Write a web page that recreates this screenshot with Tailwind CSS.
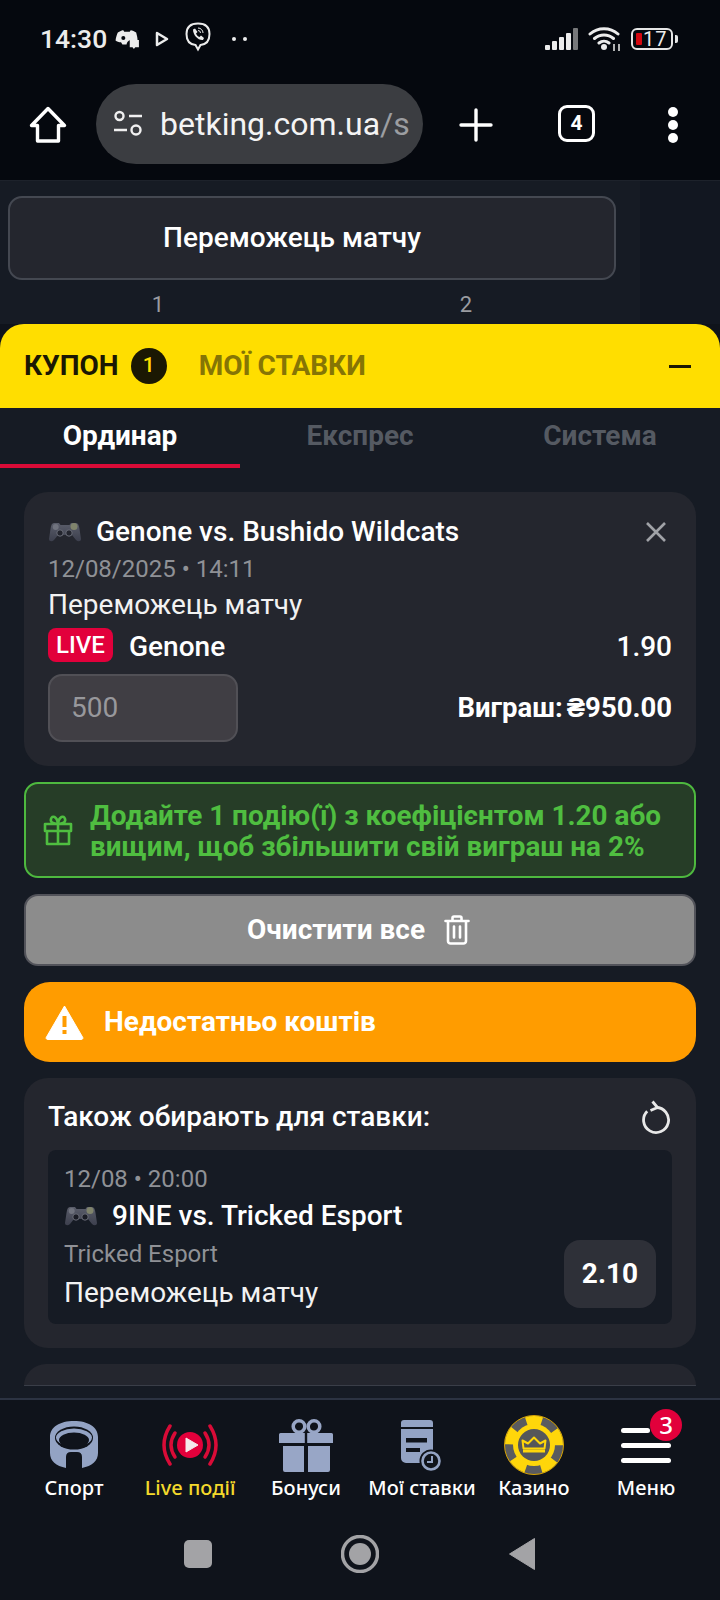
<!DOCTYPE html>
<html lang="uk"><head><meta charset="utf-8">
<script src="https://cdn.jsdelivr.net/npm/@tailwindcss/browser@4"></script>
</head>
<body class="m-0 bg-[#0f131b]">
<div class="w-[720px] h-[1600px] overflow-hidden flex flex-col font-['Roboto',sans-serif] text-white bg-[#0f131b]">

  <!-- status bar -->
  <div class="h-[78px] shrink-0 bg-[#05080e] flex items-center pl-[40px] pr-[42px]">
    <span class="text-[26.500px] font-medium text-[#ececec] leading-none">14:30</span>
    <svg class="ml-[7px]" width="26" height="22" viewBox="0 0 28 24"><path d="M4 5c3-2 5-2.500 6-2.500l1 1.500h6l1-1.500c2 .2 4 1 6 2.500 1 4 1.500 6 1.500 8h-8a6 6 0 0 0-4 5H9l-1.500-2.500C5 15.500 3 14.500 1.500 13.500 2 10 3 7 4 5z" fill="#ececec"/><circle cx="10" cy="11" r="2.200" fill="#05080e"/><path d="M17 13h10v8h-4l-1.500 2-1.500-2h-3z" fill="#ececec"/></svg>
    <svg class="ml-[15px]" width="14" height="16" viewBox="0 0 14 16"><path d="M2 2l10 6-10 6z" fill="none" stroke="#ececec" stroke-width="2.500" stroke-linejoin="round"/></svg>
    <svg class="ml-[16px]" width="26" height="34" viewBox="0 0 26 34"><path d="M13 1.500c7 0 11.500 3 11.500 10.500 0 7-3.500 10.500-9 11l-2.500 4.500-2.500-4.500c-6-.5-9-4-9-11C1.500 4.500 6 1.500 13 1.500z" fill="none" stroke="#ececec" stroke-width="2"/><path d="M8 7.500l2-1 2.500 3.500-1.500 1.500c.5 1.500 2 3 3.500 3.500l1.500-1.500 3 2.500-1 2c-5 .5-10-5-10-10.500z" fill="#ececec"/><path d="M13 6a5 5 0 0 1 5 5M13 8.500a2.500 2.500 0 0 1 2.500 2.500" fill="none" stroke="#ececec" stroke-width="1"/></svg>
    <div class="ml-[21px] flex gap-[7px]"><span class="w-[4px] h-[4px] rounded-full bg-[#ececec]"></span><span class="w-[4px] h-[4px] rounded-full bg-[#ececec]"></span></div>
    <div class="ml-auto flex items-center gap-[9px]">
      <svg width="34" height="24" viewBox="0 0 34 24"><rect x="0" y="18" width="5" height="5" rx="1" fill="#ececec"/><rect x="7" y="14" width="5" height="9" rx="1" fill="#ececec"/><rect x="14" y="10" width="5" height="13" rx="1" fill="#ececec"/><rect x="21" y="6" width="5" height="17" rx="1" fill="#ececec"/><rect x="28" y="1" width="5" height="22" rx="1" fill="#77787a"/></svg>
      <svg width="34" height="26" viewBox="0 0 34 26"><path d="M2 8a21 21 0 0 1 28 0M6.500 12.500a14.500 14.500 0 0 1 19 0M11 17a8 8 0 0 1 10 0" fill="none" stroke="#ececec" stroke-width="3" stroke-linecap="round"/><circle cx="16" cy="21" r="3" fill="#ececec"/><path d="M26 18v7M31 18v7" stroke="#ececec" stroke-width="1.500"/></svg>
      <div class="flex items-center gap-[2px]">
        <div class="w-[42px] h-[22px] rounded-[6px] border-2 border-[#e6e6e6] flex items-center pl-[3px] gap-[1px]">
          <span class="w-[6px] h-[12px] rounded-[1px] bg-[#d4070f]"></span>
          <span class="text-[20px] leading-none text-[#ececec] tracking-[1px]">17</span>
        </div>
        <span class="w-[3px] h-[8px] rounded-r-[2px] bg-[#e6e6e6]"></span>
      </div>
    </div>
  </div>

  <!-- browser bar -->
  <div class="h-[102px] shrink-0 bg-[#05080e] flex items-start pt-[6px]">
    <svg class="ml-[29px] mt-[22px]" width="38" height="38" viewBox="0 0 38 38"><path d="M19 2.500L35.500 19.500H29.500V35H8.500V19.500H2.500z" fill="none" stroke="#fff" stroke-width="3.400" stroke-linejoin="round"/></svg>
    <div class="ml-[29px] w-[327px] h-[80px] rounded-[40px] bg-[#3b3d41] flex items-center pl-[17px]">
      <svg class="shrink-0" width="30" height="28" viewBox="0 0 30 28"><circle cx="6.500" cy="6" r="4" fill="none" stroke="#f0f0f0" stroke-width="2.400"/><path d="M16 6h13M1 20h13" stroke="#f0f0f0" stroke-width="2.600"/><circle cx="23" cy="20" r="4.500" fill="none" stroke="#f0f0f0" stroke-width="2.400"/></svg>
      <span class="ml-[17px] text-[32px] leading-none whitespace-nowrap text-[#f4f4f4]">betking.com.ua<span class="text-[#9c9ea1]">/s</span></span>
    </div>
    <svg class="ml-[36px] mt-[24px]" width="34" height="34" viewBox="0 0 34 34"><path d="M17 2v30M2 17h30" stroke="#fff" stroke-width="3.400" stroke-linecap="round"/></svg>
    <div class="ml-[65px] mt-[21px] w-[37px] h-[37px] rounded-[9px] border-[3.500px] border-white flex items-center justify-center text-[21px] font-bold leading-none">4</div>
    <div class="ml-[73px] mt-[23px] flex flex-col gap-[3px]"><span class="w-[10px] h-[10px] rounded-full bg-white"></span><span class="w-[10px] h-[10px] rounded-full bg-white"></span><span class="w-[10px] h-[10px] rounded-full bg-white"></span></div>
  </div>

  <!-- page behind -->
  <div class="h-[144px] shrink-0 flex bg-[#161b24] border-t border-[#1d222b]">
    <div class="w-[640px] pl-[8px] pt-[15px]">
      <div class="w-[608px] h-[84px] rounded-[14px] border-2 border-[#444851] bg-[#24262e] flex items-center justify-center pr-[40px] text-[28px] font-medium">Переможець матчу</div>
      <div class="flex mt-[10px] text-[22px] text-[#9a9ca1] leading-[30px]">
        <span class="w-[300px] text-center">1</span><span class="w-[316px] text-center">2</span>
      </div>
    </div>
    <div class="w-[80px] bg-[#121721]"></div>
  </div>

  <!-- coupon sheet -->
  <div class="h-[1076px] shrink-0 bg-[#161b24] rounded-t-[24px] flex flex-col border-b-2 border-[#2c3342]">
    <div class="h-[84px] shrink-0 bg-[#ffde00] rounded-t-[24px] flex items-center pl-[24px] pr-[29px] text-[28px] font-bold">
      <span class="text-[#1b1803]">КУПОН</span>
      <span class="ml-[12px] w-[36px] h-[36px] rounded-full bg-[#1b1803] text-[#ffde00] text-[21px] font-medium flex items-center justify-center">1</span>
      <span class="ml-[32px] text-[#867505]">МОЇ СТАВКИ</span>
      <span class="ml-auto w-[22px] h-[3px] bg-[#1b1803]"></span>
    </div>
    <div class="h-[60px] shrink-0 flex text-[28px] font-bold text-[#555a62]">
      <div class="w-[240px] h-[60px] border-b-[4px] border-[#d90b37] text-white flex items-center justify-center">Ординар</div>
      <div class="w-[240px] h-[56px] flex items-center justify-center">Експрес</div>
      <div class="w-[240px] h-[56px] flex items-center justify-center">Система</div>
    </div>

    <div class="px-[24px] pt-[24px] flex flex-col gap-[16px]">
      <!-- bet card -->
      <div class="h-[274px] rounded-[24px] bg-[#24262e] px-[24px] pt-[22px]">
        <div class="h-[36px] flex items-center">
          <svg class="shrink-0 ml-[1px]" width="32" height="20" viewBox="0 0 32 20"><defs><linearGradient id="p1" x1="0" y1="0" x2="0" y2="1"><stop offset="0" stop-color="#5a5d6a"/><stop offset="1" stop-color="#3c3f4d"/></linearGradient></defs><path d="M5 1h5l1.500 2h9L22 1h5c2 0 3 2 3.500 6l1.500 10c0 2.500-3 3-5 1l-4-5H9l-4 5c-2 2-5 1.500-5-1L1.500 7C2 3 3 1 5 1z" fill="url(#p1)"/><circle cx="6.700" cy="5" r="3" fill="#70737e"/><circle cx="25" cy="4.500" r="3.500" fill="#80846c"/><circle cx="11" cy="11" r="3.200" fill="#23252e" stroke="#6b6e79"/><circle cx="20" cy="11" r="3.200" fill="#23252e" stroke="#6b6e79"/></svg>
          <span class="ml-[15px] text-[28px] font-medium whitespace-nowrap">Genone vs. Bushido Wildcats</span>
          <svg class="ml-auto mr-[6px]" width="20" height="20" viewBox="0 0 20 20"><path d="M1 1l18 18M19 1L1 19" stroke="#a0a2a7" stroke-width="2.600"/></svg>
        </div>
        <div class="text-[24px] leading-[38px] text-[#8f9196] whitespace-nowrap">12/08/2025 • 14:11</div>
        <div class="text-[28px] leading-[34px] text-[#f2f2f2] whitespace-nowrap">Переможець матчу</div>
        <div class="h-[36px] mt-[5px] flex items-center">
          <span class="w-[65px] h-[34px] rounded-[8px] bg-[#e2003b] text-[24px] font-medium flex items-center justify-center">LIVE</span>
          <span class="ml-[16px] pt-[3px] text-[28px] font-medium">Genone</span>
          <span class="ml-auto pt-[3px] text-[28px] font-medium">1.90</span>
        </div>
        <div class="mt-[11px] flex items-center justify-between">
          <div class="w-[190px] h-[68px] rounded-[14px] bg-[#403e44] border-2 border-[#515056] flex items-center pl-[21px] text-[28px] text-[#98989c]">500</div>
          <span class="flex gap-[4px] text-[27.500px] font-bold whitespace-nowrap"><span>Виграш:</span><span>₴950.00</span></span>
        </div>
      </div>

      <!-- promo -->
      <div class="h-[96px] rounded-[14px] bg-[#263d27] border-2 border-[#4eb93f] flex items-center pl-[17px] text-[#4fbe40]">
        <svg class="shrink-0" width="30" height="32" viewBox="0 0 30 32"><path d="M2 10h26v7H2zM4 17h22v13H4zM15 10v20M15 10c-5 0-8-2-7-5 1-4 6-3 7 5zm0 0c5 0 8-2 7-5-1-4-6-3-7 5z" fill="none" stroke="#4fbe40" stroke-width="2.600" stroke-linejoin="round"/></svg>
        <div class="ml-[17px] pt-[1px] text-[27.900px] font-bold leading-[31px] whitespace-nowrap">Додайте 1 подію(ї) з коефіцієнтом 1.20 або<br>вищим, щоб збільшити свій виграш на 2%</div>
      </div>

      <!-- clear -->
      <div class="h-[72px] rounded-[14px] bg-[#8c8c8c] border-2 border-[#52535a] flex items-center justify-center gap-[19px] pr-[3px] text-[28px] font-bold">
        <span>Очистити все</span>
        <svg width="26" height="30" viewBox="0 0 26 30"><path d="M1.500 6h23M8.500 6V3a1.500 1.500 0 0 1 1.500-1.500h6A1.500 1.500 0 0 1 17.500 3v3M4 6v20a2.500 2.500 0 0 0 2.500 2.500h13A2.500 2.500 0 0 0 22 26V6M10 11.500v11M16 11.500v11" fill="none" stroke="#fff" stroke-width="2.600" stroke-linecap="round"/></svg>
      </div>

      <!-- warning -->
      <div class="h-[80px] rounded-[26px] bg-[#ff9c00] flex items-center pl-[21px] text-[28px] font-bold">
        <svg class="shrink-0" width="39" height="36" viewBox="0 0 39 36"><path d="M19.500 2L37.500 33a1.500 1.500 0 0 1-1.300 2.500H2.800A1.500 1.500 0 0 1 1.500 33z" fill="#fff" stroke="#fff" stroke-linejoin="round"/><path d="M17.500 12h4v11h-4zM17.500 26h4v4h-4z" fill="#ff9c00"/></svg>
        <span class="ml-[20px]">Недостатньо коштів</span>
      </div>

      <!-- also -->
      <div class="h-[270px] rounded-[24px] bg-[#24262e] px-[24px]">
        <div class="h-[72px] flex items-center justify-between">
          <span class="pt-[6px] text-[28px] font-medium whitespace-nowrap">Також обирають для ставки:</span>
          <svg class="mt-[6px] mr-[1px]" width="30" height="34" viewBox="0 0 30 34"><path d="M15 7.500A12.500 12.500 0 1 1 6.200 11.200" fill="none" stroke="#e8e8e8" stroke-width="2.800"/><path d="M11.500 1.500L16.500 7.500L9.500 10.500" fill="none" stroke="#e8e8e8" stroke-width="2.800"/></svg>
        </div>
        <div class="h-[174px] rounded-[8px] bg-[#161b24] px-[16px] pt-[11px] relative">
          <div class="text-[24px] leading-[36px] text-[#8f9196]">12/08 • 20:00</div>
          <div class="h-[38px] flex items-center">
            <svg class="shrink-0 ml-[1px]" width="32" height="20" viewBox="0 0 32 20"><defs><linearGradient id="p2" x1="0" y1="0" x2="0" y2="1"><stop offset="0" stop-color="#5a5d6a"/><stop offset="1" stop-color="#3c3f4d"/></linearGradient></defs><path d="M5 1h5l1.500 2h9L22 1h5c2 0 3 2 3.500 6l1.500 10c0 2.500-3 3-5 1l-4-5H9l-4 5c-2 2-5 1.500-5-1L1.500 7C2 3 3 1 5 1z" fill="url(#p2)"/><circle cx="6.700" cy="5" r="3" fill="#70737e"/><circle cx="25" cy="4.500" r="3.500" fill="#80846c"/><circle cx="11" cy="11" r="3.200" fill="#1a1c25" stroke="#6b6e79"/><circle cx="20" cy="11" r="3.200" fill="#1a1c25" stroke="#6b6e79"/></svg>
            <span class="ml-[15px] text-[28px] font-medium whitespace-nowrap">9INE vs. Tricked Esport</span>
          </div>
          <div class="text-[24px] leading-[38px] text-[#8f9196]">Tricked Esport</div>
          <div class="text-[28px] leading-[40px] text-[#f2f2f2]">Переможець матчу</div>
          <div class="absolute right-[16px] top-[90px] w-[92px] h-[68px] rounded-[16px] bg-[#2e3038] flex items-center justify-center text-[28px] font-bold">2.10</div>
        </div>
      </div>
    </div>
    <!-- next card peeks -->
    <div class="mx-[24px] mt-[16px] h-[22px] rounded-t-[24px] bg-[#24262e] border-b border-[#3a3e48] shrink-0"></div>
  </div>

  <!-- bottom nav -->
  <div class="h-[200px] shrink-0 bg-[#0f131b] flex flex-col font-['Noto_Sans',sans-serif]">
    <div class="flex pl-[16px] pt-[14px] text-[20px] font-medium leading-[26px]">
      <div class="w-[116px] flex flex-col items-center">
        <div class="h-[62px] flex items-center justify-center">
          <svg width="48" height="48" viewBox="0 0 48 48"><path d="M0 16C0 6 10 0 24 0S48 6 48 16V32C48 40 42 45 32 47V36Q32 31 27 31H21Q16 31 16 36V47C6 45 0 40 0 32Z" fill="#93a3c4"/><ellipse cx="24" cy="17" rx="19" ry="11.500" fill="#0f131b"/><ellipse cx="24" cy="16.500" rx="18" ry="9" fill="#93a3c4"/><ellipse cx="24" cy="19" rx="15" ry="7.500" fill="#0f131b"/></svg>
        </div>
        <span class="-mt-[1px]">Спорт</span>
      </div>
      <div class="w-[116px] flex flex-col items-center text-[#f4d92b]">
        <div class="h-[62px] flex items-center justify-center">
          <svg width="58" height="42" viewBox="0 0 58 42"><circle cx="29" cy="21" r="13" fill="#e2003b"/><path d="M25 14L37 21L25 28z" fill="#f4e9ec" stroke="#f4e9ec" stroke-linejoin="round"/><path d="M14 9Q6 21 14 33M44 9Q52 21 44 33" fill="none" stroke="#d90b37" stroke-width="3.500" stroke-linecap="round"/><path d="M9 2Q-3 21 9 40M49 2Q61 21 49 40" fill="none" stroke="#d90b37" stroke-width="3.500" stroke-linecap="round"/></svg>
        </div>
        <span class="-mt-[1px]">Live події</span>
      </div>
      <div class="w-[116px] flex flex-col items-center">
        <div class="h-[62px] flex items-center justify-center">
          <svg width="54" height="54" viewBox="0 0 54 54"><circle cx="20" cy="8.500" r="5.800" fill="none" stroke="#98a6c6" stroke-width="3.500"/><circle cx="35" cy="8.500" r="5.800" fill="none" stroke="#98a6c6" stroke-width="3.500"/><path d="M1.500 15H25.800V25H0V16.500A1.500 1.500 0 0 1 1.500 15ZM28.200 15H52.500A1.500 1.500 0 0 1 54 16.500V25H28.200ZM4 28H25V54H6A2 2 0 0 1 4 52ZM29 28H51V52A2 2 0 0 1 49 54H29Z" fill="#98a6c6"/></svg>
        </div>
        <span class="-mt-[1px]">Бонуси</span>
      </div>
      <div class="w-[116px] flex flex-col items-center">
        <div class="h-[62px] flex items-center justify-center">
          <svg width="44" height="52" viewBox="0 0 44 52"><path d="M1 4a3 3 0 0 1 3-3H30a3 3 0 0 1 3 3V8H1ZM1 10H33V38a6 6 0 0 1-6 6H6a5 5 0 0 1-5-5Z" fill="#93a3c4"/><path d="M6 19H27V23.500H6ZM6 29H20V33H6Z" fill="#0f131b"/><circle cx="31" cy="42" r="11.500" fill="#0f131b"/><circle cx="31" cy="42" r="8.500" fill="none" stroke="#93a3c4" stroke-width="2.600"/><path d="M32 37V43H27" fill="none" stroke="#93a3c4" stroke-width="2"/></svg>
        </div>
        <span class="-mt-[1px] whitespace-nowrap">Мої ставки</span>
      </div>
      <div class="w-[108px] flex flex-col items-center">
        <div class="h-[62px] flex items-center justify-center">
          <svg width="60" height="60" viewBox="0 0 60 60"><circle cx="30" cy="30" r="29.500" fill="#5a5b5f" stroke="#d9a400" stroke-width="1"/><circle cx="30" cy="30" r="24.500" fill="none" stroke="#ffd60a" stroke-width="9" stroke-dasharray="15.390 15.390" transform="rotate(-108 30 30)"/><circle cx="30" cy="30" r="21" fill="#ffd60a"/><circle cx="30" cy="30" r="16" fill="#55565a"/><path d="M19.500 33.500L18.500 25.500L24 28.500L30 22.500L36 28.500L41.500 25.500L40.500 33.500Z" fill="none" stroke="#ffd60a" stroke-width="2" stroke-linejoin="round"/><path d="M19 34.500H41V37.500H19Z" fill="#ffd60a"/></svg>
        </div>
        <span class="-mt-[1px]">Казино</span>
      </div>
      <div class="w-[116px] flex flex-col items-center">
        <div class="h-[62px] flex items-center justify-center relative">
          <div class="w-[50px] flex flex-col gap-[10px]">
            <span class="w-[29px] h-[5px] rounded-full bg-white"></span>
            <span class="w-[50px] h-[5px] rounded-full bg-white"></span>
            <span class="w-[50px] h-[5px] rounded-full bg-white"></span>
          </div>
          <span class="absolute left-[29px] top-[-5px] w-[32px] h-[32px] rounded-full bg-[#e2003b] flex items-center justify-center text-[24px] leading-none">3</span>
        </div>
        <span class="-mt-[1px]">Меню</span>
      </div>
    </div>
    <!-- android nav -->
    <div class="mt-[34px] h-[38px] flex items-center pl-[184px]">
      <span class="w-[28px] h-[28px] rounded-[5px] bg-[#a3a3a6]"></span>
      <svg class="ml-[129px]" width="38" height="38" viewBox="0 0 38 38"><circle cx="19" cy="19" r="17.500" fill="none" stroke="#a3a3a6" stroke-width="3.500"/><circle cx="19" cy="19" r="11" fill="#a3a3a6"/></svg>
      <svg class="ml-[129px]" width="28" height="34" viewBox="0 0 28 34"><path d="M1.500 17L26.500 1.500V32.500Z" fill="#a3a3a6" stroke="#a3a3a6" stroke-linejoin="round"/></svg>
    </div>
  </div>
</div>
</body></html>
